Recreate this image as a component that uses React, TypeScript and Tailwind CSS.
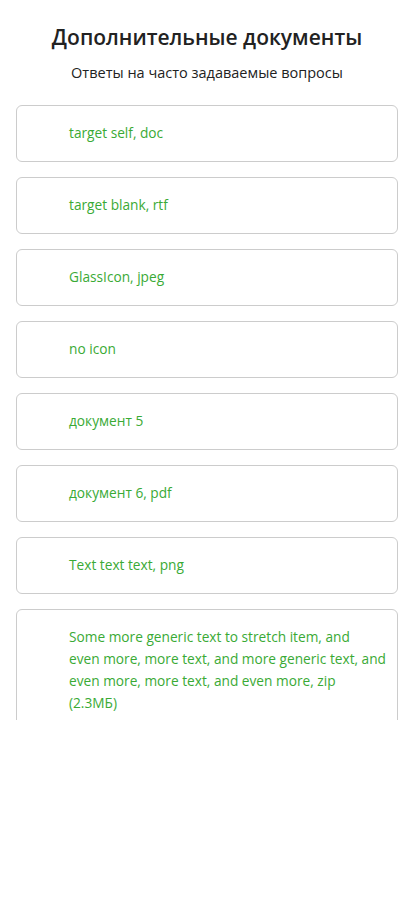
const docs = [
  "target self, doc",
  "target blank, rtf",
  "GlassIcon, jpeg",
  "no icon",
  "документ 5",
  "документ 6, pdf",
  "Text text text, png",
  "Some more generic text to stretch item, and\neven more, more text, and more generic text, and\neven more, more text, and even more, zip\n(2.3МБ)",
]

export default function App() {
  return (
    <div className="h-[720px] overflow-hidden bg-white font-['Open_Sans',sans-serif]">
      <div className="px-4 pt-[22px]">
        <h1 className="text-center text-[21px] leading-[30px] font-semibold text-[#222]">
          Дополнительные документы
        </h1>
        <p className="mt-[10px] text-center text-[14.5px] leading-[22px] text-[#222]">
          Ответы на часто задаваемые вопросы
        </p>
        <div className="mt-[21px] flex flex-col gap-[15px]">
          {docs.map((d) => (
            <a
              key={d}
              href="#"
              className="block whitespace-pre-line rounded-[6px] border border-[#cccccc] pl-[52px] pr-[8px] pt-[16px] pb-[17px] text-[13.7px] leading-[22px] text-[#3aaa35]"
            >
              {d}
            </a>
          ))}
        </div>
      </div>
    </div>
  )
}
